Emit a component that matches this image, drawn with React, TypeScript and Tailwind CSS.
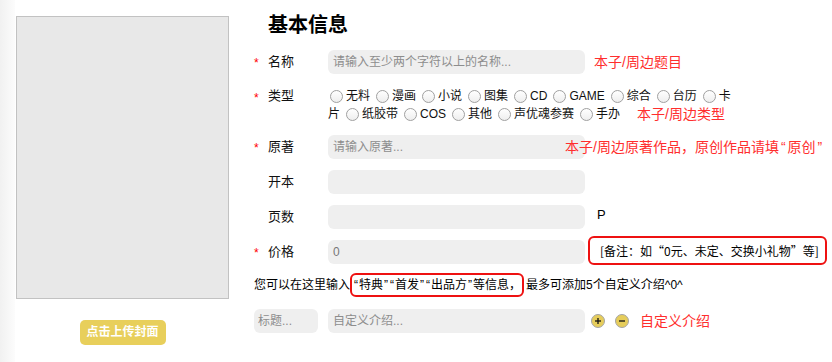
import React from "react";

const RED = "text-[#ff2e2e]";

function Star({ pad = "pt-[4px]" }: { pad?: string }) {
  return (
    <span className={`w-[14px] shrink-0 self-start text-[12px] leading-[18px] text-[#ff0000] ${pad}`}>*</span>
  );
}

function Q({ c, m = "mx-[1px]" }: { c: string; m?: string }) {
  return <span className={m}>{c}</span>;
}

function Radio({ label }: { label: string }) {
  return (
    <span className="flex items-center shrink-0">
      <span className="w-[13px] h-[13px] rounded-full border border-[#a0a0a0] bg-linear-to-b from-white to-[#eeeeee] shrink-0 mr-[3px]" />
      <span>{label}</span>
    </span>
  );
}

function Field({ w = "w-[257px]", text = "", tone = "text-[#8d8d8d]", pl = "px-[5px]" }: { w?: string; text?: string; tone?: string; pl?: string }) {
  return (
    <div className={`${w} h-[24px] shrink-0 rounded-[6px] bg-[#efefef] ${pl} text-[12px] leading-[24px] ${tone} whitespace-nowrap overflow-hidden`}>
      {text}
    </div>
  );
}

function CircleBtn({ minus = false, className = "" }: { minus?: boolean; className?: string }) {
  return (
    <svg width="14" height="14" viewBox="0 0 14 14" className={`shrink-0 ${className}`}>
      <circle cx="7" cy="7" r="6.5" fill="#e6cd5b" stroke="#a4a4a4" strokeWidth="1" />
      <line x1="4" y1="7" x2="10" y2="7" stroke="#111" strokeWidth="1.3" />
      {!minus && <line x1="7" y1="4" x2="7" y2="10" stroke="#111" strokeWidth="1.3" />}
    </svg>
  );
}

export default function App() {
  const line1 = ["无料", "漫画", "小说", "图集", "CD", "GAME", "综合", "台历"];
  const line2 = ["纸胶带", "COS", "其他", "声优魂参赛", "手办"];
  return (
    <div className="flex w-[832px] h-[362px] bg-white overflow-hidden font-['Liberation_Sans','Noto_Sans_CJK_SC',sans-serif] text-[#111]">
      <div className="w-[15px] shrink-0 bg-linear-to-r from-[#f1f1f1] to-[#fcfcfc]" />
      <div className="ml-[1px] pt-[16px] w-[213px] shrink-0 flex flex-col items-center">
        <div className="w-[213px] h-[283px] bg-[#e8e8e8] border border-[#c2c2c2]" />
        <button className="mt-[21px] w-[86px] h-[25px] rounded-[5px] bg-[#e8cf5b] text-white text-[12px] font-bold leading-[25px]">
          点击上传封面
        </button>
      </div>

      <div className="ml-[25px] flex flex-col">
        <h1 className="pl-[14px] pt-[11px] text-[20px] leading-[28px] font-bold text-black">基本信息</h1>

        {/* 名称 */}
        <div className="mt-[11px] flex items-center h-[24px]">
          <Star />
          <span className="w-[60px] shrink-0 text-[13px]">名称</span>
          <Field text="请输入至少两个字符以上的名称..." />
          <span className={`ml-[9px] text-[14px] ${RED}`}>本子/周边题目</span>
        </div>

        {/* 类型 */}
        <div className="mt-[13px] flex">
          <Star pad="pt-[2px]" />
          <span className="w-[60px] shrink-0 text-[13px] leading-[18px]">类型</span>
          <div className="flex flex-col text-[12px] leading-[18px]">
            <div className="flex items-center gap-[6px] pl-[2px] h-[18px] whitespace-nowrap">
              {line1.map((l) => (
                <Radio key={l} label={l} />
              ))}
              <Radio label="卡" />
            </div>
            <div className="flex items-center gap-[6px] h-[18px] whitespace-nowrap">
              <span>片</span>
              {line2.map((l) => (
                <Radio key={l} label={l} />
              ))}
              <span className={`ml-[11px] text-[14px] ${RED}`}>本子/周边类型</span>
            </div>
          </div>
        </div>

        {/* 原著 */}
        <div className="mt-[12px] flex items-center h-[24px] relative">
          <Star />
          <span className="w-[60px] shrink-0 text-[13px]">原著</span>
          <Field text="请输入原著..." />
          <span className={`absolute left-[311px] top-0 h-[24px] leading-[24px] whitespace-nowrap text-[14px] ${RED}`}>
            本子/周边原著作品，原创作品请填<Q c="“" m="mx-[2px]" />原创<Q c="”" m="mx-[2px]" />
          </span>
        </div>

        {/* 开本 */}
        <div className="mt-[11px] flex items-center h-[24px]">
          <span className="w-[14px] shrink-0" />
          <span className="w-[60px] shrink-0 text-[13px]">开本</span>
          <Field />
        </div>

        {/* 页数 */}
        <div className="mt-[11px] flex items-center h-[24px]">
          <span className="w-[14px] shrink-0" />
          <span className="w-[60px] shrink-0 text-[13px]">页数</span>
          <Field />
          <span className="ml-[12px] mb-[4px] text-[13px] text-black">P</span>
        </div>

        {/* 价格 */}
        <div className="mt-[11px] flex items-center h-[24px]">
          <Star />
          <span className="w-[60px] shrink-0 text-[13px]">价格</span>
          <Field text="0" tone="text-[#777]" />
          <div className="ml-[3px] mb-[3px] w-[239px] h-[29px] shrink-0 border-2 border-[#ee1111] rounded-[6px] pl-[10px] text-[12px] leading-[25px] text-black whitespace-nowrap font-['Noto_Sans_CJK_SC',sans-serif]">
            [备注：如“0元、未定、交换小礼物”等]
          </div>
        </div>

        {/* hint */}
        <div className="mt-[9px] flex items-center h-[24px] text-[12px] text-black whitespace-nowrap">
          <span>您可以在这里输入</span>
          <span className="h-[24px] border-2 border-[#ee1111] rounded-[6px] leading-[20px] px-[1px]">
            <Q c="“" />特典<Q c="”" /><Q c="“" />首发<Q c="”" /><Q c="“" />出品方<Q c="”" />等信息，
          </span>
          <span className="ml-[2px]">最多可添加5个自定义介绍^0^</span>
        </div>

        {/* custom intro */}
        <div className="mt-[12px] flex items-center h-[24px]">
          <Field w="w-[64px]" pl="px-[4px]" text="标题..." />
          <div className="ml-[10px]">
            <Field text="自定义介绍..." />
          </div>
          <CircleBtn className="ml-[6px]" />
          <CircleBtn minus className="ml-[10px]" />
          <span className={`ml-[11px] text-[14px] ${RED}`}>自定义介绍</span>
        </div>
      </div>
    </div>
  );
}
